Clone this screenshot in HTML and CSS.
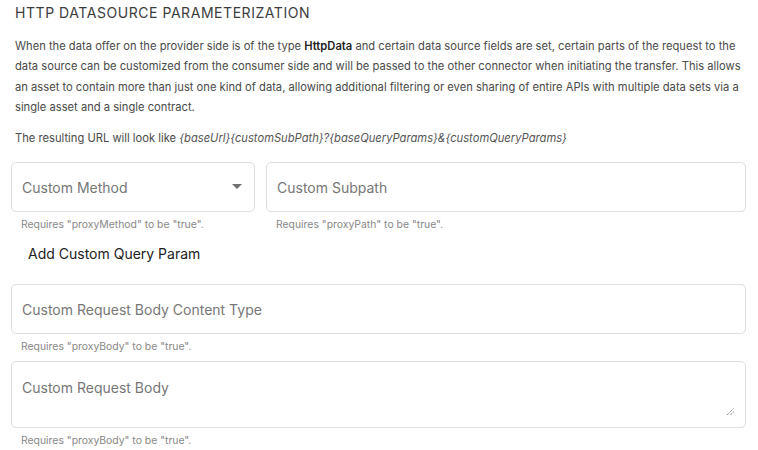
FILE: index.html
```html
<!DOCTYPE html>
<html lang="en">
<head>
<meta charset="utf-8">
<link rel="stylesheet" href="styles.css">
</head>
<body>
<div class="page">
  <h2 class="title">HTTP Datasource Parameterization</h2>
  <p class="text">When the data offer on the provider side is of the type <b>HttpData</b> and certain data source fields are set, certain parts of the request to the data source can be customized from the consumer side and will be passed to the other connector when initiating the transfer. This allows an asset to contain more than just one kind of data, allowing additional filtering or even sharing of entire APIs with multiple data sets via a single asset and a single contract.</p>
  <p class="text url">The resulting URL will look like <i>{baseUrl}{customSubPath}?{baseQueryParams}&amp;{customQueryParams}</i></p>

  <div class="row">
    <div class="field method">
      <div class="box">
        <span class="ph">Custom Method</span>
        <span class="arrow"></span>
      </div>
      <div class="hint">Requires "proxyMethod" to be "true".</div>
    </div>
    <div class="field subpath">
      <div class="box"><span class="ph">Custom Subpath</span></div>
      <div class="hint">Requires "proxyPath" to be "true".</div>
    </div>
  </div>

  <button class="add">Add Custom Query Param</button>

  <div class="field block">
    <div class="box"><span class="ph">Custom Request Body Content Type</span></div>
    <div class="hint">Requires "proxyBody" to be "true".</div>
  </div>

  <div class="field block">
    <div class="box area">
      <span class="ph">Custom Request Body</span>
      <svg class="grip" width="9" height="9" viewBox="0 0 9 9"><path d="M1 8 L8 1 M4.5 8 L8 4.5" stroke="#666" stroke-width="1" stroke-dasharray="1 1" fill="none"/></svg>
    </div>
    <div class="hint">Requires "proxyBody" to be "true".</div>
  </div>
</div>
</body>
</html>
```

FILE: styles.css
```css
html, body {
  margin: 0;
  padding: 0;
  background: #fff;
}
.page {
  width: 735px;
  padding: 0 12px 0 11px;
  font-family: Inter, "Noto Sans", sans-serif;
  color: #333;
}
.title {
  margin: 5px 0 0 4px;
  font-size: 14px;
  font-weight: 400;
  text-transform: uppercase;
  letter-spacing: 0.55px;
  line-height: 16px;
  color: #3c3c3c;
}
.text {
  margin: 15px 4px 0 4px;
  font-size: 11.2px;
  line-height: 20.4px;
  color: #4a4a4a;
}
.text b {
  font-weight: 600;
  color: #222;
}
.text.url {
  margin-top: 10px;
}
.text i {
  color: #555;
}
.row {
  display: flex;
  gap: 11px;
  margin-top: 14px;
}
.method { width: 244px; flex: none; }
.subpath { flex: 1; }
.box {
  position: relative;
  height: 48px;
  border: 1px solid #dedede;
  border-radius: 5px;
  display: flex;
  align-items: center;
  padding: 0 10px;
}
.ph {
  font-size: 14px;
  color: #777;
}
.method .box { justify-content: space-between; }
.arrow {
  width: 0;
  height: 0;
  border-left: 5px solid transparent;
  border-right: 5px solid transparent;
  border-top: 5px solid #707070;
  margin-right: 2px;
  margin-bottom: 2px;
}
.hint {
  font-size: 10.4px;
  color: #888;
  line-height: 14px;
  padding: 6px 0 0 10px;
  height: 16px;
}
.add {
  display: block;
  background: none;
  border: none;
  margin: 1px 0 0 0;
  padding: 0 0 0 17px;
  height: 36px;
  font-family: Inter, "Noto Sans", sans-serif;
  font-size: 14px;
  font-weight: 400;
  color: #222;
}
.block { margin-top: 5px; }
.add + .block { margin-top: 13px; }
.area {
  align-items: flex-start;
  padding-top: 17px;
  box-sizing: border-box;
  height: 67px;
}
.grip {
  position: absolute;
  right: 10px;
  bottom: 11px;
}
```
